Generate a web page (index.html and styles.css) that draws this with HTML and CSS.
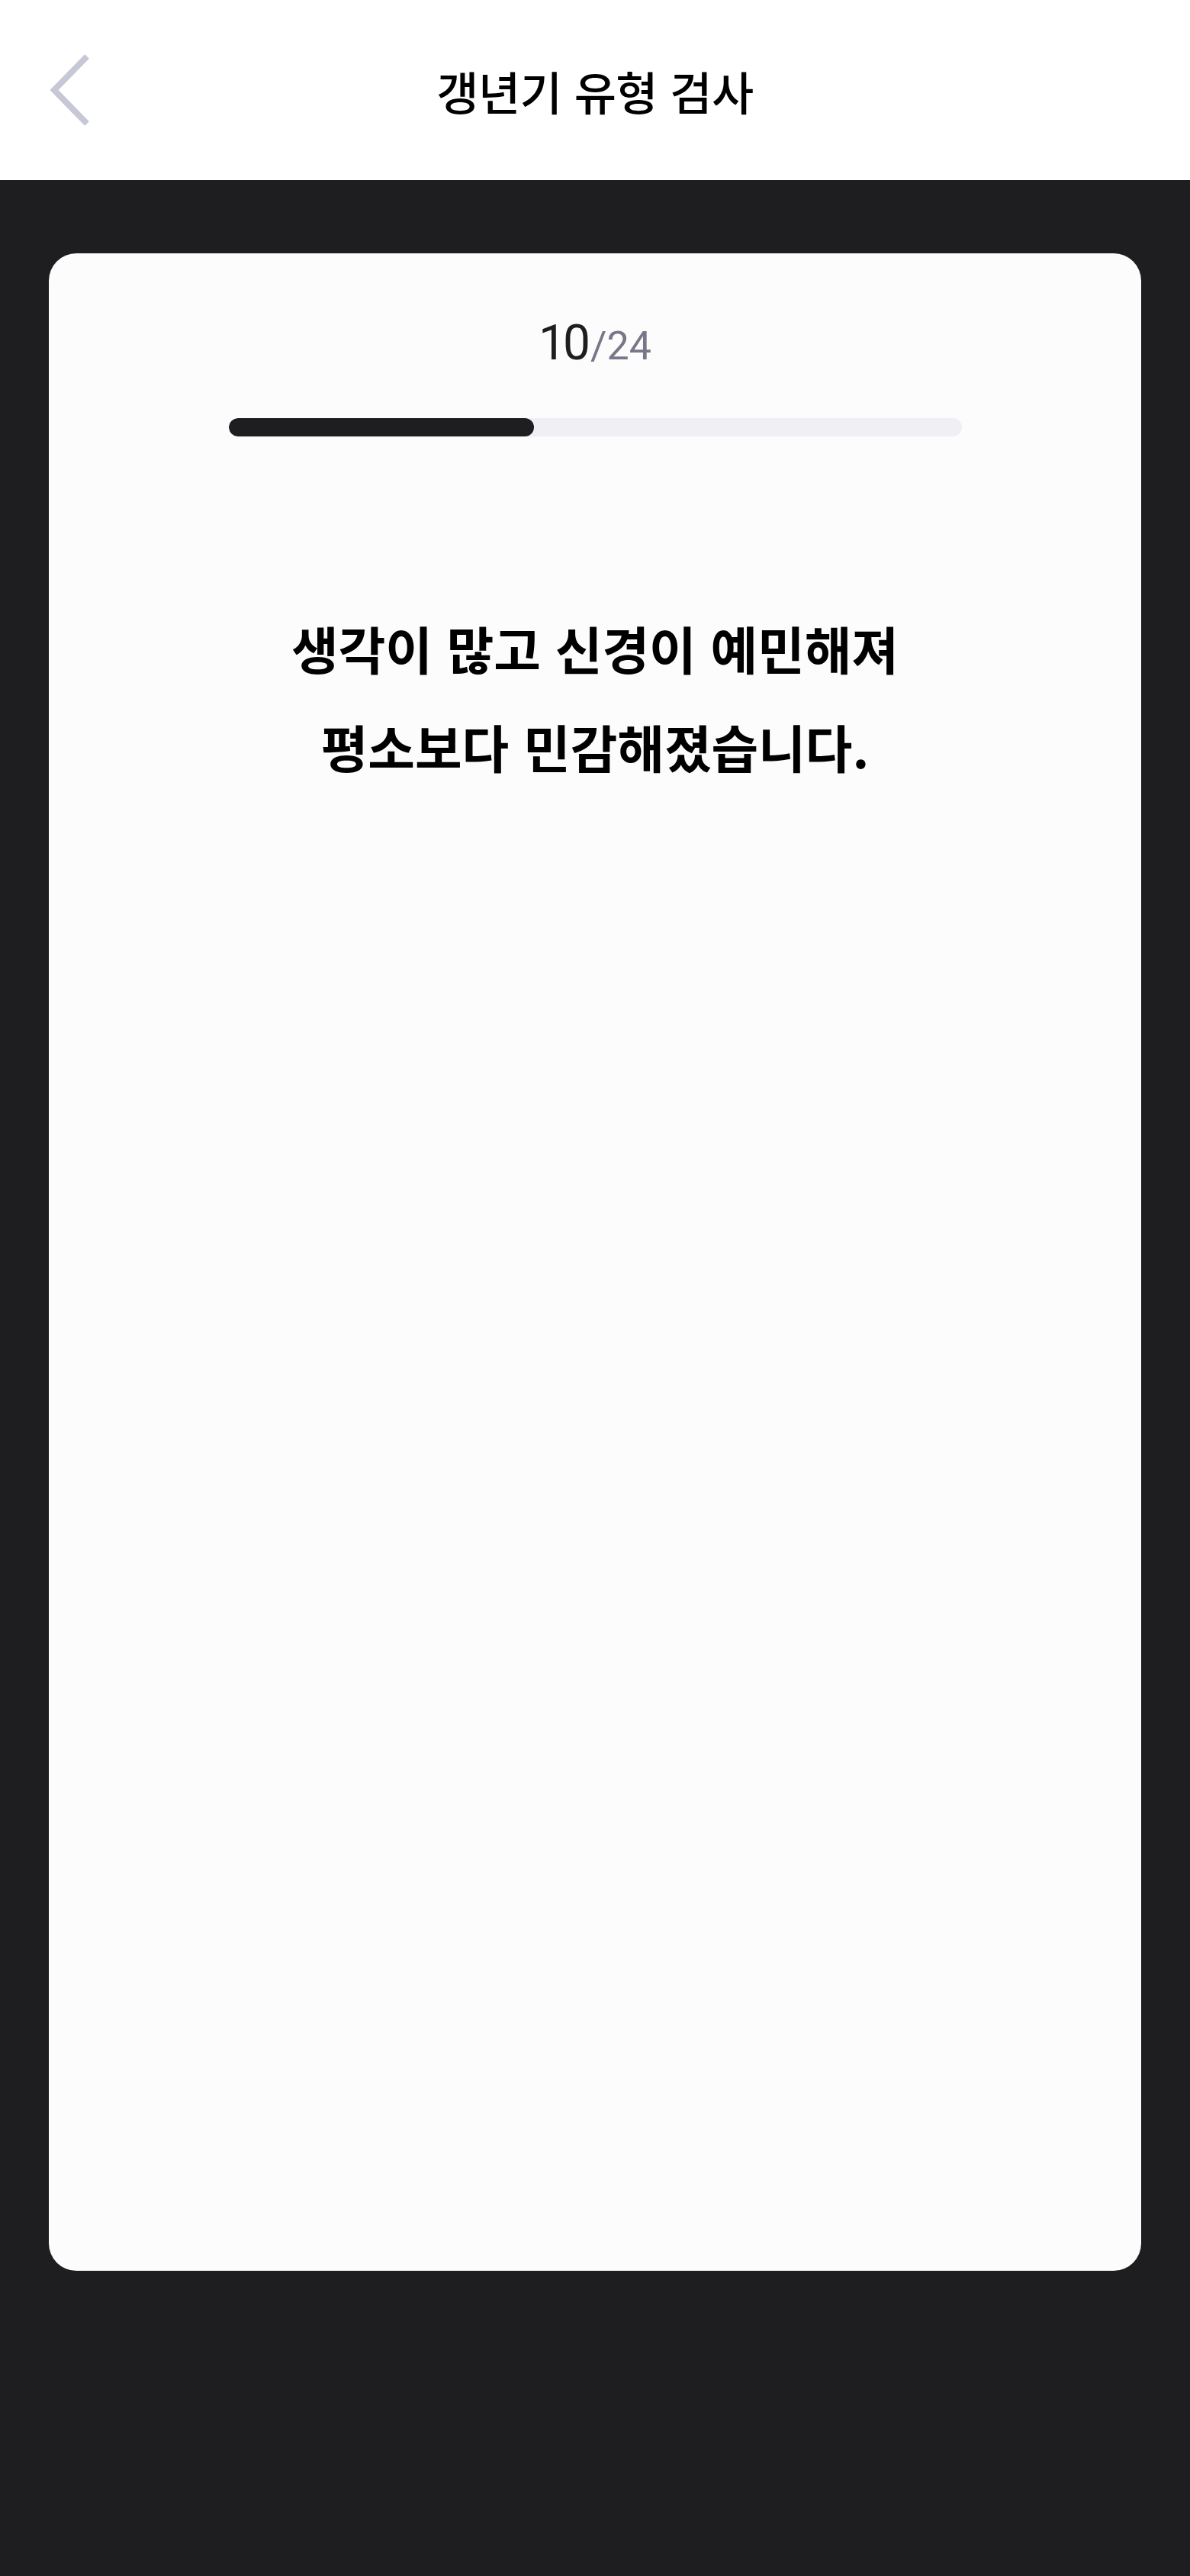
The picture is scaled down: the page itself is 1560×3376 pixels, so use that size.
FILE: index.html
```html
<!DOCTYPE html>
<html lang="ko">
<head>
<meta charset="utf-8">
<title>갱년기 유형 검사</title>
<link rel="stylesheet" href="styles.css">
</head>
<body>
<header class="topbar">
  <div class="topbar-side">
    <button class="back-btn" aria-label="뒤로">
      <svg width="60" height="100" viewBox="0 0 60 100"><polyline points="50,6 7,50 50,94" fill="none" stroke="#c6c7d7" stroke-width="8"/></svg>
    </button>
  </div>
  <h1 class="topbar-title">갱년기 유형 검사</h1>
  <div class="topbar-side"></div>
</header>
<main class="stage">
  <section class="card">
    <div class="counter"><span class="counter-cur">10</span><span class="counter-total">/24</span></div>
    <div class="progress"><div class="progress-fill" style="width: 41.67%"></div></div>
    <p class="question">생각이 많고 신경이 예민해져<br>평소보다 민감해졌습니다.</p>
  </section>
</main>
</body>
</html>
```
FILE: styles.css
```css
html, body {
  margin: 0;
  padding: 0;
}
body {
  background: #1e1e20;
  width: 1560px;
  min-height: 3376px;
  font-family: "Noto Sans CJK KR", "Noto Sans", sans-serif;
}
.topbar {
  height: 236px;
  background: #ffffff;
  display: grid;
  grid-template-columns: 1fr auto 1fr;
  align-items: center;
}
.topbar-side {
  display: flex;
  align-items: center;
}
.back-btn {
  margin-left: 64px;
  padding: 0;
  border: 0;
  background: none;
  display: flex;
  align-items: center;
}
.topbar-title {
  margin: 0;
  font-size: 60px;
  font-weight: 500;
  color: #000;
  letter-spacing: -0.5px;
}
.stage {
  padding: 96px 64px 0;
}
.card {
  background: #fcfcfc;
  border-radius: 36px;
  height: 2644px;
  box-sizing: border-box;
  padding-top: 80px;
  display: flex;
  flex-direction: column;
  align-items: center;
}
.counter {
  font-family: Roboto, "Liberation Sans", sans-serif;
  line-height: 76px;
  height: 76px;
  display: flex;
  align-items: baseline;
}
.counter-cur {
  font-size: 64px;
  color: #1e1e20;
  letter-spacing: -4px;
}
.counter-total {
  font-size: 52px;
  color: #777789;
  margin-left: 4px;
}
.progress {
  margin-top: 60px;
  width: 961px;
  height: 24px;
  border-radius: 12px;
  background: #efeff4;
  overflow: hidden;
}
.progress-fill {
  height: 100%;
  background: #1e1e20;
  border-radius: 12px;
}
.question {
  margin: 212px 0 0;
  text-align: center;
  font-size: 67px;
  font-weight: 700;
  line-height: 129px;
  color: #000;
  letter-spacing: 0;
}
```
